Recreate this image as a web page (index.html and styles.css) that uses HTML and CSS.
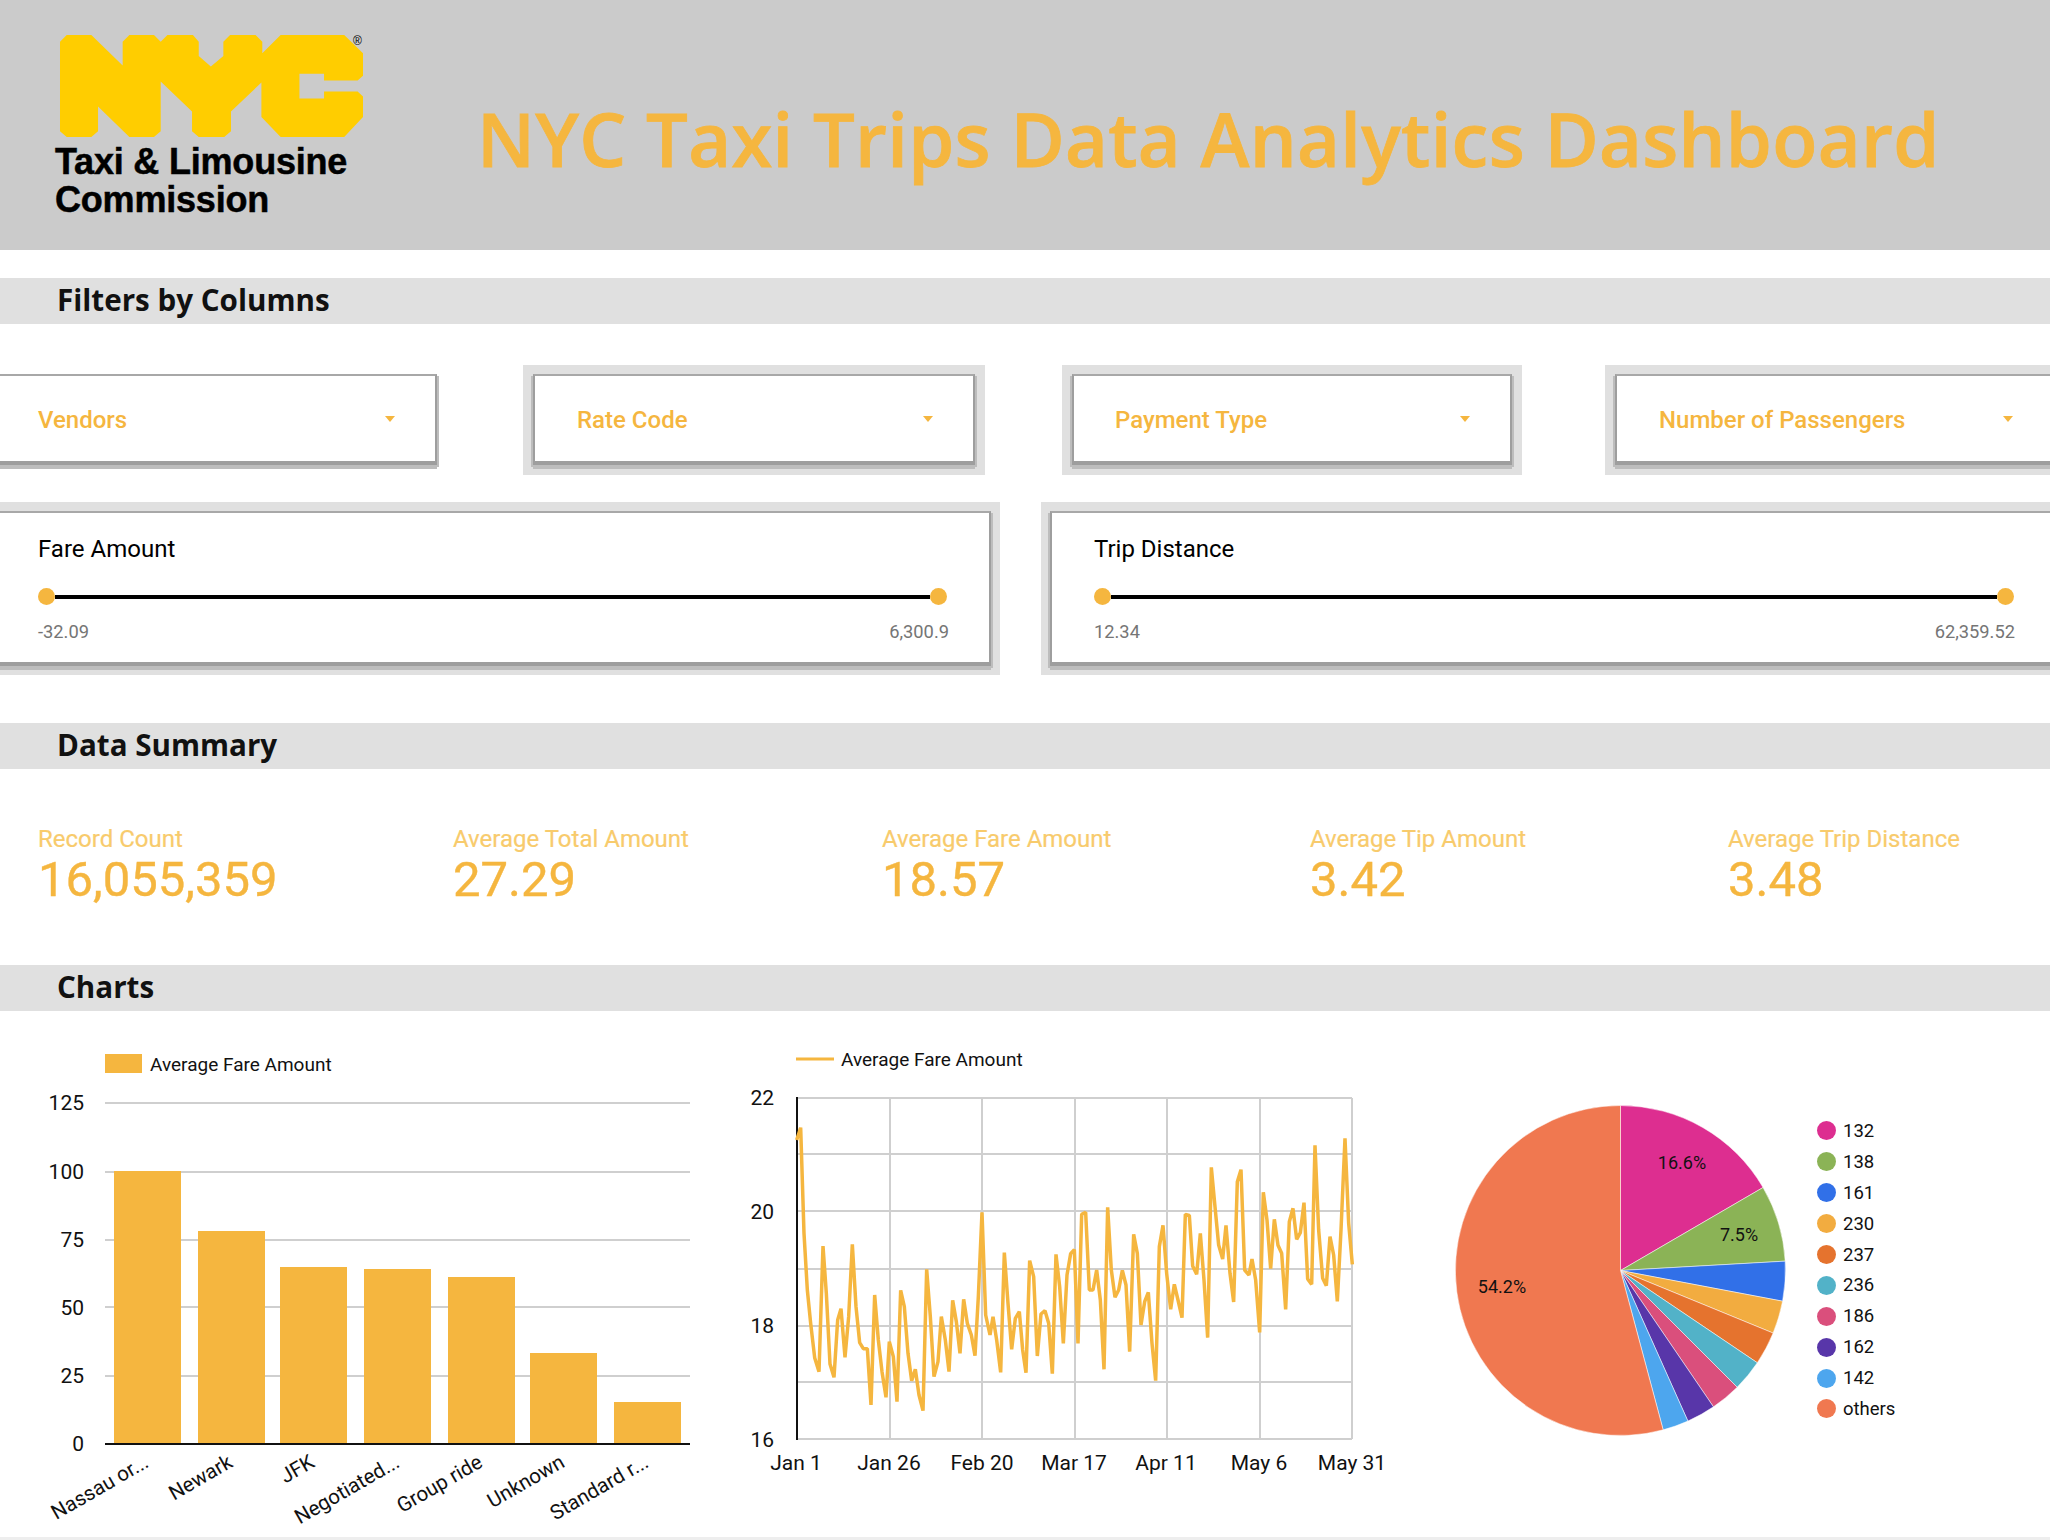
FILE: index.html
```html
<!DOCTYPE html>
<html lang="en">
<head>
    <meta charset="UTF-8">
    <title>NYC Taxi Trips Data Analytics Dashboard</title>
    <link rel="stylesheet" href="styles.css">
</head>
<body>

    <header class="top-bar">
        <div class="logo">
            <svg class="logo-mark" width="303" height="102" viewBox="135 105 677 307" preserveAspectRatio="none">
                <polygon fill="#ffcd00" points="135,125 150,105 205,105 275,197 275,125 290,105 345,105 360,125 375,105 432,105 445,125 445,168 472,200 500,168 500,125 515,105 572,105 587,125 587,160 628,105 770,105 812,160 812,228 800,242 725,242 725,222 670,222 670,296 725,296 725,275 800,275 812,290 812,352 770,412 628,412 585,352 585,248 517,335 517,395 502,412 445,412 430,395 430,335 360,245 360,395 345,412 290,412 220,320 220,395 205,412 150,412 135,395"/>
            </svg>
            <span class="logo-reg">®</span>
            <div class="logo-text">Taxi &amp; Limousine<br>Commission</div>
        </div>
        <h1 class="page-title">NYC Taxi Trips Data Analytics Dashboard</h1>
    </header>

    <h2 class="section-title">Filters by Columns</h2>

    <div class="filter-row">
        <div class="frame frame-plain frame-vendors">
            <div class="box select-box"><span>Vendors</span><i class="arrow"></i></div>
        </div>
        <div class="frame frame-rate">
            <div class="box select-box"><span>Rate Code</span><i class="arrow"></i></div>
        </div>
        <div class="frame frame-payment">
            <div class="box select-box"><span>Payment Type</span><i class="arrow"></i></div>
        </div>
        <div class="frame frame-passengers">
            <div class="box select-box"><span>Number of Passengers</span><i class="arrow"></i></div>
        </div>
    </div>

    <div class="slider-row">
        <div class="frame frame-fare">
            <div class="box slider-box">
                <div class="slider-label">Fare Amount</div>
                <div class="slider-track"><i class="handle"></i><i class="track-line"></i><i class="handle"></i></div>
                <div class="slider-values"><span>-32.09</span><span>6,300.9</span></div>
            </div>
        </div>
        <div class="frame frame-trip">
            <div class="box slider-box">
                <div class="slider-label">Trip Distance</div>
                <div class="slider-track"><i class="handle"></i><i class="track-line"></i><i class="handle"></i></div>
                <div class="slider-values"><span>12.34</span><span>62,359.52</span></div>
            </div>
        </div>
    </div>

    <h2 class="section-title section-summary">Data Summary</h2>

    <div class="kpi-row">
        <div class="kpi kpi-1"><div class="kpi-label">Record Count</div><div class="kpi-value">16,055,359</div></div>
        <div class="kpi kpi-2"><div class="kpi-label">Average Total Amount</div><div class="kpi-value">27.29</div></div>
        <div class="kpi kpi-3"><div class="kpi-label">Average Fare Amount</div><div class="kpi-value">18.57</div></div>
        <div class="kpi kpi-4"><div class="kpi-label">Average Tip Amount</div><div class="kpi-value">3.42</div></div>
        <div class="kpi kpi-5"><div class="kpi-label">Average Trip Distance</div><div class="kpi-value">3.48</div></div>
    </div>

    <h2 class="section-title section-charts">Charts</h2>

    <div class="chart-row">
        <!-- bar chart -->
        <svg class="chart" width="740" height="526" viewBox="0 1011 740 526">
            <rect class="bar" x="105" y="1054" width="37" height="19"/>
            <text class="legend-text" x="150" y="1071">Average Fare Amount</text>

            <g class="grid">
                <line x1="105" y1="1103" x2="690" y2="1103"/>
                <line x1="105" y1="1172" x2="690" y2="1172"/>
                <line x1="105" y1="1240" x2="690" y2="1240"/>
                <line x1="105" y1="1307" x2="690" y2="1307"/>
                <line x1="105" y1="1376" x2="690" y2="1376"/>
            </g>

            <rect class="bar" x="114" y="1171" width="67" height="273"/>
            <rect class="bar" x="198" y="1231" width="67" height="213"/>
            <rect class="bar" x="280" y="1267" width="67" height="177"/>
            <rect class="bar" x="364" y="1269" width="67" height="175"/>
            <rect class="bar" x="448" y="1277" width="67" height="167"/>
            <rect class="bar" x="530" y="1353" width="67" height="91"/>
            <rect class="bar" x="614" y="1402" width="67" height="42"/>
            <line class="axis" x1="105" y1="1444" x2="690" y2="1444"/>

            <g class="axis-text" text-anchor="end">
                <text x="84" y="1110">125</text>
                <text x="84" y="1179">100</text>
                <text x="84" y="1247">75</text>
                <text x="84" y="1315">50</text>
                <text x="84" y="1383">25</text>
                <text x="84" y="1451">0</text>
            </g>
            <g class="axis-text tilted" text-anchor="end">
                <text transform="translate(150 1466) rotate(-30)">Nassau or...</text>
                <text transform="translate(234 1466) rotate(-30)">Newark</text>
                <text transform="translate(316 1466) rotate(-30)">JFK</text>
                <text transform="translate(401 1466) rotate(-30)">Negotiated...</text>
                <text transform="translate(484 1466) rotate(-30)">Group ride</text>
                <text transform="translate(566 1466) rotate(-30)">Unknown</text>
                <text transform="translate(650 1466) rotate(-30)">Standard r...</text>
            </g>
        </svg>

        <!-- line chart -->
        <svg class="chart" width="680" height="526" viewBox="740 1011 680 526">
            <line class="series-key" x1="796" y1="1059" x2="834" y2="1059"/>
            <text class="legend-text" x="841" y="1066">Average Fare Amount</text>

            <g class="grid">
                <line x1="797" y1="1098" x2="1352" y2="1098"/>
                <line x1="797" y1="1154" x2="1352" y2="1154"/>
                <line x1="797" y1="1211" x2="1352" y2="1211"/>
                <line x1="797" y1="1269" x2="1352" y2="1269"/>
                <line x1="797" y1="1326" x2="1352" y2="1326"/>
                <line x1="797" y1="1382" x2="1352" y2="1382"/>
                <line x1="797" y1="1439" x2="1352" y2="1439"/>
                <line x1="890" y1="1098" x2="890" y2="1439"/>
                <line x1="982" y1="1098" x2="982" y2="1439"/>
                <line x1="1075" y1="1098" x2="1075" y2="1439"/>
                <line x1="1167" y1="1098" x2="1167" y2="1439"/>
                <line x1="1260" y1="1098" x2="1260" y2="1439"/>
                <line x1="1352" y1="1098" x2="1352" y2="1439"/>
            </g>
            <line class="axis" x1="797" y1="1097" x2="797" y2="1440"/>

            <!-- points are in 3x units, origin 790,1090 -->
            <polyline class="series" transform="translate(790 1090) scale(.33333)" points="20,150 32,113 42,430 52,600 62,700 74,803 87,845 99,468 109,610 120,822 132,862 143,690 153,656 165,802 176,680 187,463 198,650 209,758 220,776 232,776 243,945 254,615 265,750 276,845 288,922 298,755 310,800 321,935 332,601 343,650 354,790 365,872 376,838 387,915 399,962 410,538 421,680 432,860 444,815 454,680 466,750 477,845 488,631 499,695 510,790 521,628 532,700 544,735 555,797 565,620 576,367 587,675 600,735 609,680 620,750 632,847 643,488 654,640 665,778 676,685 688,665 698,780 708,848 719,512 731,560 742,798 753,672 765,662 776,700 787,851 798,493 809,590 820,760 831,555 842,491 853,479 864,760 875,373 887,367 898,600 909,600 920,540 931,630 942,838 953,352 964,540 975,622 986,600 997,541 1008,585 1019,785 1031,433 1042,490 1053,705 1064,635 1075,607 1086,760 1097,872 1108,470 1119,406 1130,550 1142,658 1153,583 1164,630 1176,683 1186,373 1198,376 1208,528 1220,553 1231,430 1242,570 1253,743 1264,232 1275,350 1286,465 1298,507 1308,406 1320,550 1331,636 1342,275 1353,239 1364,540 1377,555 1386,507 1397,570 1409,727 1420,307 1431,390 1442,536 1453,388 1464,466 1475,490 1487,658 1498,395 1509,355 1520,448 1531,428 1542,338 1553,567 1565,583 1575,166 1586,420 1598,565 1609,587 1620,440 1631,495 1642,634 1653,420 1665,145 1676,400 1687,523"/>

            <g class="axis-text" text-anchor="end">
                <text x="774" y="1105">22</text>
                <text x="774" y="1219">20</text>
                <text x="774" y="1333">18</text>
                <text x="774" y="1447">16</text>
            </g>
            <g class="axis-text" text-anchor="middle">
                <text x="796" y="1470">Jan 1</text>
                <text x="889" y="1470">Jan 26</text>
                <text x="982" y="1470">Feb 20</text>
                <text x="1074" y="1470">Mar 17</text>
                <text x="1166" y="1470">Apr 11</text>
                <text x="1259" y="1470">May 6</text>
                <text x="1352" y="1470">May 31</text>
            </g>
        </svg>

        <!-- pie chart -->
        <svg class="chart" width="380" height="526" viewBox="1420 1011 380 526">
            <g class="pie" transform="translate(1620.5 1270.5) scale(1.006) translate(-1620 -1270)">
                <path fill="#dd2e90" d="M1620 1270 L1620 1106 A164 164 0 0 1 1761.7 1187.5 Z"/>
                <path fill="#8bb356" d="M1620 1270 L1761.7 1187.5 A164 164 0 0 1 1783.7 1260.7 Z"/>
                <path fill="#3170e8" d="M1620 1270 L1783.7 1260.7 A164 164 0 0 1 1781.1 1300.5 Z"/>
                <path fill="#f2ac40" d="M1620 1270 L1781.1 1300.5 A164 164 0 0 1 1771.7 1332.2 Z"/>
                <path fill="#e5732e" d="M1620 1270 L1771.7 1332.2 A164 164 0 0 1 1756 1361.7 Z"/>
                <path fill="#52b2c8" d="M1620 1270 L1756 1361.7 A164 164 0 0 1 1736 1386 Z"/>
                <path fill="#da4f7c" d="M1620 1270 L1736 1386 A164 164 0 0 1 1712.4 1405.5 Z"/>
                <path fill="#5836a9" d="M1620 1270 L1712.4 1405.5 A164 164 0 0 1 1687 1419.7 Z"/>
                <path fill="#4da6ee" d="M1620 1270 L1687 1419.7 A164 164 0 0 1 1662.4 1428.4 Z"/>
                <path fill="#f07850" d="M1620 1270 L1662.4 1428.4 A164 164 0 1 1 1620 1106 Z"/>
            </g>
            <g class="pie-text" text-anchor="middle">
                <text x="1682" y="1169">16.6%</text>
                <text x="1739" y="1241">7.5%</text>
                <text x="1502" y="1293">54.2%</text>
            </g>
        </svg>

        <ul class="pie-legend">
            <li><i class="dot dot-132"></i>132</li>
            <li><i class="dot dot-138"></i>138</li>
            <li><i class="dot dot-161"></i>161</li>
            <li><i class="dot dot-230"></i>230</li>
            <li><i class="dot dot-237"></i>237</li>
            <li><i class="dot dot-236"></i>236</li>
            <li><i class="dot dot-186"></i>186</li>
            <li><i class="dot dot-162"></i>162</li>
            <li><i class="dot dot-142"></i>142</li>
            <li><i class="dot dot-others"></i>others</li>
        </ul>
    </div>

    <div class="bottom-line"></div>

</body>
</html>
```

FILE: styles.css
```css
html, body {
    margin: 0;
    padding: 0;
}

body {
    width: 2050px;
    height: 1540px;
    overflow: hidden;
    background-color: #fff;
    font-family: Roboto, sans-serif;
    color: #000;
}

/* header */
.top-bar {
    display: flex;
    align-items: flex-start;
    height: 250px;
    padding-top: 35px;
    box-sizing: border-box;
    background-color: #cbcbcb;
}

.logo {
    position: relative;
    width: 310px;
    margin-left: 55px;
}

.logo-mark {
    display: block;
    margin-left: 5px;
}

.logo-reg {
    position: absolute;
    left: 298px;
    top: 0;
    font-family: "Liberation Sans", sans-serif;
    font-size: 12px;
    line-height: 12px;
}

.logo-text {
    margin-top: 6px;
    font-family: "Liberation Sans", sans-serif;
    font-size: 36px;
    font-weight: 700;
    line-height: 38px;
    letter-spacing: -0.2px;
    -webkit-text-stroke: 0.5px #000;
    white-space: nowrap;
}

.page-title {
    margin: 64px 0 0 112px;
    font-family: "Open Sans", sans-serif;
    font-size: 74px;
    font-weight: 600;
    line-height: 80px;
    letter-spacing: 0.3px;
    color: #f5b63f;
    -webkit-text-stroke: 0.8px #f5b63f;
    white-space: nowrap;
}

/* section bars */
.section-title {
    height: 46px;
    margin: 28px 0 0;
    padding-left: 57px;
    background-color: #e0e0e0;
    font-family: "Open Sans", sans-serif;
    font-size: 29.6px;
    font-weight: 700;
    line-height: 43px;
    color: #111;
}

.section-summary {
    margin-top: 48px;
}

.section-charts {
    margin-top: 0;
}

/* filters */
.filter-row {
    display: flex;
    padding-top: 41px;
}

.slider-row {
    display: flex;
    margin-top: 27px;
}

.frame {
    flex: none;
    box-sizing: border-box;
    padding: 9px 10px 10px;
    background-color: #e0e0e0;
}

.frame-plain {
    background-color: transparent;
}

.frame-vendors {
    width: 447px;
    margin-left: -10px;
    padding-right: 0;
    padding-left: 0;
}

.frame-rate {
    width: 462px;
    margin-left: 86px;
}

.frame-payment {
    width: 460px;
    margin-left: 77px;
}

.frame-passengers {
    width: 460px;
    margin-left: 83px;
}

.frame-fare {
    width: 1020px;
    margin-left: -20px;
    padding: 9px;
}

.frame-trip {
    width: 1025px;
    margin-left: 41px;
    padding: 9px;
}

.box {
    box-sizing: border-box;
    border: 2px solid #9e9e9e;
    border-top-color: #a8a8a8;
    border-bottom-width: 4px;
    background-color: #fff;
    box-shadow: 0 4px 0 #bdbdbd, 2px 2px 0 #bdbdbd, -2px 2px 0 #bdbdbd;
}

.select-box {
    display: flex;
    align-items: center;
    justify-content: space-between;
    height: 91px;
    padding: 0 40px 0 42px;
    font-size: 24px;
    font-weight: 500;
    color: #f5b63f;
}

.select-box span {
    padding-top: 2px;
}

.frame-vendors .select-box {
    padding-left: 46px;
}

.frame-payment .select-box {
    padding-left: 41px;
}

.arrow {
    width: 0;
    height: 0;
    border-top: 6px solid #f5b63f;
    border-left: 5px solid transparent;
    border-right: 5px solid transparent;
}

.slider-box {
    height: 155px;
    padding: 22px 42px 0 47px;
}

.frame-trip .slider-box {
    padding: 22px 41px 0 42px;
}

.slider-label {
    font-size: 24px;
    line-height: 28px;
}

.slider-track {
    display: flex;
    align-items: center;
    margin-top: 25px;
}

.handle {
    flex: none;
    width: 17px;
    height: 17px;
    border-radius: 50%;
    background-color: #f5b63f;
}

.track-line {
    flex: 1;
    height: 4px;
    background-color: #000;
}

.slider-values {
    display: flex;
    justify-content: space-between;
    margin: 16px -2px 0 0;
    font-size: 18.3px;
    line-height: 22px;
    color: #757575;
}

.frame-trip .slider-values {
    margin-right: -1px;
}

/* data summary */
.kpi-row {
    display: flex;
    height: 196px;
    box-sizing: border-box;
    padding: 56px 0 0 38px;
}

.kpi {
    flex: none;
}

.kpi-1 { width: 415px; }
.kpi-2 { width: 429px; }
.kpi-3 { width: 428px; }
.kpi-4 { width: 418px; }

.kpi-label {
    font-size: 24px;
    line-height: 28px;
    color: #f8cb6c;
    -webkit-text-stroke: 0.2px #f8cb6c;
}

.kpi-value {
    margin-top: 2px;
    font-size: 49px;
    line-height: 50px;
    color: #f5b63f;
    -webkit-text-stroke: 0.4px #f5b63f;
}

/* charts */
.chart-row {
    display: flex;
    height: 526px;
}

.chart {
    display: block;
    flex: none;
}

.grid line {
    stroke: #cfcfcf;
    stroke-width: 2;
}

.axis {
    stroke: #111;
    stroke-width: 2;
}

.bar {
    fill: #f5b63f;
}

.series {
    fill: none;
    stroke: #f5b63f;
    stroke-width: 10.5;
    stroke-linejoin: bevel;
}

.series-key {
    stroke: #f5b63f;
    stroke-width: 3;
}

.legend-text {
    font-size: 19px;
    fill: #111;
}

.axis-text {
    font-size: 21px;
    fill: #111;
}

.tilted {
    font-size: 20.5px;
}

.pie path {
    stroke: #fff;
    stroke-width: 0.5;
}

.pie-text {
    font-size: 18px;
    fill: #111;
}

.pie-legend {
    flex: none;
    margin: 0 0 0 17px;
    padding: 104.5px 0 0;
    list-style: none;
    font-size: 18.5px;
    color: #111;
}

.pie-legend li {
    display: flex;
    align-items: center;
    gap: 7px;
    height: 30.9px;
}

.dot {
    width: 19px;
    height: 19px;
    border-radius: 50%;
}

.dot-132 { background-color: #dd2e90; }
.dot-138 { background-color: #8bb356; }
.dot-161 { background-color: #3170e8; }
.dot-230 { background-color: #f2ac40; }
.dot-237 { background-color: #e5732e; }
.dot-236 { background-color: #52b2c8; }
.dot-186 { background-color: #da4f7c; }
.dot-162 { background-color: #5836a9; }
.dot-142 { background-color: #4da6ee; }
.dot-others { background-color: #f07850; }

.bottom-line {
    height: 3px;
    background-color: #eee;
}
```
